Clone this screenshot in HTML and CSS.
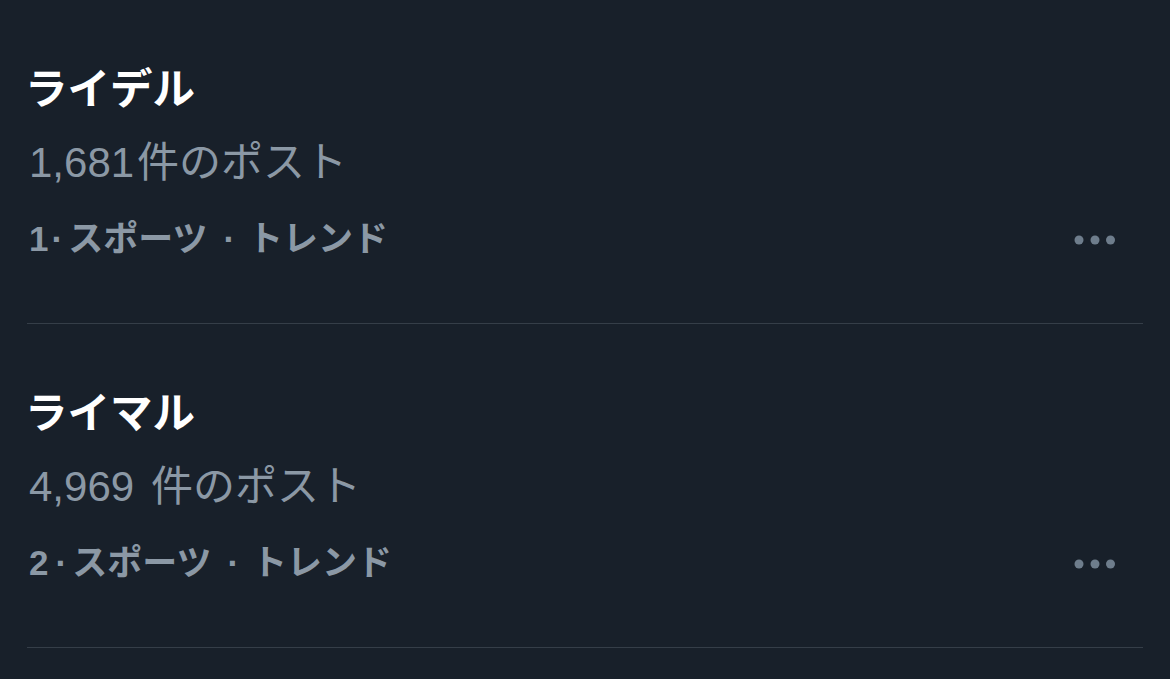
FILE: index.html
```html
<!DOCTYPE html>
<html lang="ja">
<head>
<meta charset="utf-8">
<link rel="stylesheet" href="styles.css">
</head>
<body>
<div class="list">
  <div class="trend">
    <div class="title">ライデル</div>
    <div class="count">1,681<span class="gap gap-s"></span>件のポスト</div>
    <div class="meta">
      <span class="meta-text">1<span class="sep1">·</span>スポーツ<span class="sep">·</span>トレンド</span>
      <svg class="more" width="42" height="10" viewBox="0 0 42 10"><circle cx="5" cy="5" r="4.5"/><circle cx="21" cy="5" r="4.5"/><circle cx="36.5" cy="5" r="4.5"/></svg>
    </div>
  </div>
  <div class="trend">
    <div class="title">ライマル</div>
    <div class="count">4,969<span class="gap gap-l"></span>件のポスト</div>
    <div class="meta">
      <span class="meta-text">2<span class="sep1 sep1-w">·</span>スポーツ<span class="sep">·</span>トレンド</span>
      <svg class="more" width="42" height="10" viewBox="0 0 42 10"><circle cx="5" cy="5" r="4.5"/><circle cx="21" cy="5" r="4.5"/><circle cx="36.5" cy="5" r="4.5"/></svg>
    </div>
  </div>
</div>
</body>
</html>
```
FILE: styles.css
```css
html, body {
  margin: 0;
  padding: 0;
  background: #18202a;
  width: 1170px;
  height: 679px;
  overflow: hidden;
}
.list {
  padding: 0 27px;
  font-family: "Liberation Sans", "Noto Sans CJK JP", sans-serif;
}
.trend {
  display: flex;
  flex-direction: column;
  padding: 47px 0 47px 2px;
  border-bottom: 1px solid #353e48;
}
.title {
  color: #ffffff;
  font-size: 42.5px;
  font-weight: 700;
  line-height: 78px;
  margin-left: -4px;
  font-family: "Noto Sans CJK JP", sans-serif;
}
.count {
  color: #8b98a5;
  font-size: 42px;
  font-weight: 400;
  line-height: 76px;
}
.gap {
  display: inline-block;
}
.gap-s {
  width: 3px;
}
.gap-l {
  width: 17px;
}
.meta {
  display: flex;
  align-items: center;
  justify-content: space-between;
  line-height: 75px;
  height: 75px;
}
.meta-text {
  color: #8b98a5;
  font-size: 35px;
  font-weight: 700;
}
.sep1 {
  margin: 0 5px 0 3px;
}
.sep1-w {
  margin-left: 7px;
}
.sep {
  margin: 0 13px 0 16px;
}
.more {
  fill: #6e7d8c;
  margin-right: 27px;
  margin-top: 2px;
}
```
